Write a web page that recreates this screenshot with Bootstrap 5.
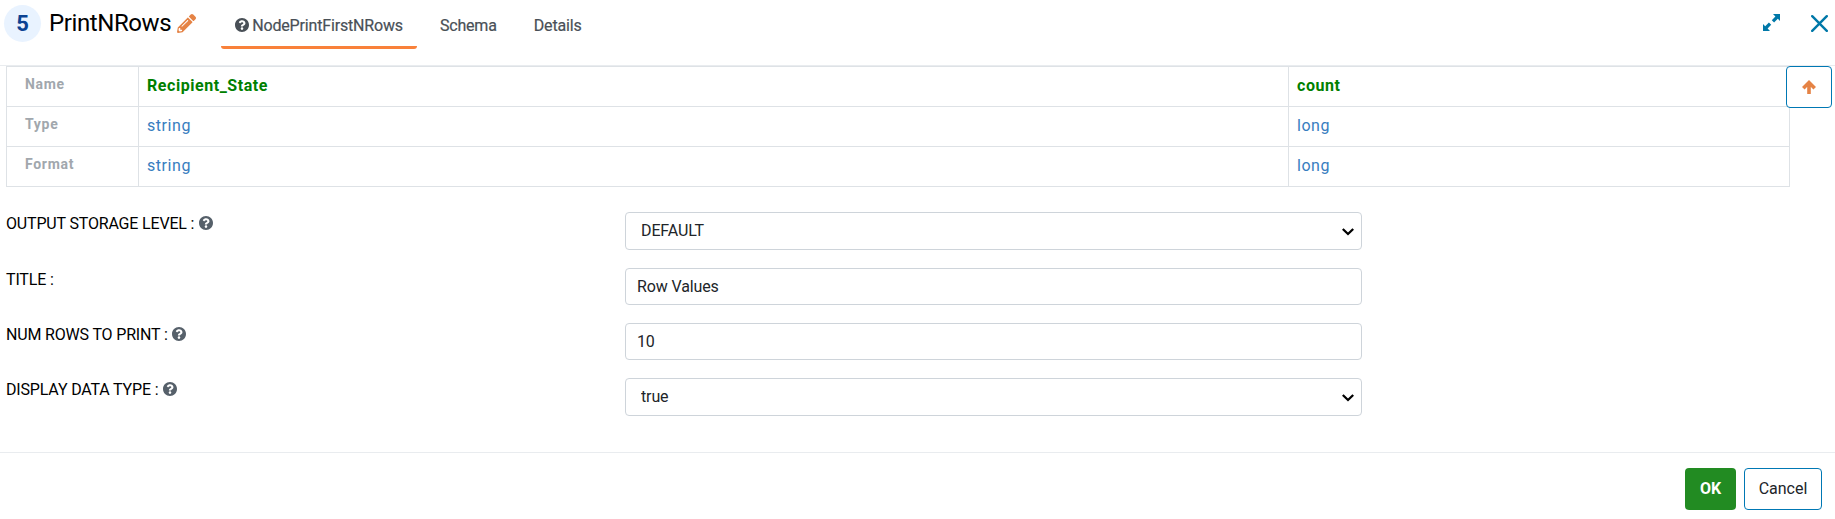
<!DOCTYPE html>
<html lang="en">
<head>
<meta charset="utf-8">
<title>PrintNRows</title>
<link href="https://cdn.jsdelivr.net/npm/bootstrap@5.3.0/dist/css/bootstrap.min.css" rel="stylesheet">
<style>
  body { font-family: Roboto, sans-serif; font-size: 16px; color: #000; background: #fff; overflow: hidden; }
  .dlg-head { height: 66px; border-bottom: 1px solid #e9ecef; padding-left: 4px; }
  .step-no { width: 37px; height: 37px; margin-top: 5px; background: #e9f3ff; color: #0b4292; font-size: 22px; font-weight: 700; }
  .dlg-title { font-size: 24px; line-height: 36px; margin: 5px 0 0 8px; font-weight: 400; letter-spacing: -.4px; }
  .pencil { width: 19px; height: 19px; margin: 14px 0 0 6px; fill: #e58345; }
  .dlg-tabs { margin-left: 25px; letter-spacing: -.17px; }
  .dlg-tabs .nav-link { height: 49px; padding: 14px 14px 0; line-height: 24px; font-weight: 400; color: #495057; border-bottom: 3px solid transparent; border-radius: 3px; -webkit-text-stroke: .2px #495057; }
  .dlg-tabs .nav-item + .nav-item { margin-left: 9px; }
  .dlg-tabs .nav-link.active { border-bottom-color: #f9813a; }
  .q { width: 14px; height: 14px; fill: #495057; }
  .q-tab { margin: -3px 3px 0 0; }
  .q-form { margin: -3px 0 0 1px; fill: #56606a; }
  .schema { width: 1784px; margin-left: 6px; table-layout: fixed; border-collapse: collapse; letter-spacing: .55px; }
  .schema th, .schema td { border: 1px solid #dee2e6; height: 40px; padding: 0 8px 2px; line-height: 24px; vertical-align: middle; color: #377dc0; }
  .schema th { font-size: 14px; color: #a1a7ad; padding: 0 18px 5px; letter-spacing: .7px; }
  .schema .field-name { color: #008000; font-weight: 700; }
  .up-btn { position: absolute; left: 1786px; top: 66px; width: 46px; height: 42px; border: 1px solid #0078b4; border-radius: 4px; background: #fff; }
  .fields { padding: 25px 0 0 6px; }
  .field-row { margin-bottom: 18px; letter-spacing: -.17px; }
  .field-row label { width: 619px; line-height: 24px; }
  .field-row .form-control, .field-row .form-select { width: 737px; height: 37px; padding: 0 11px; border: 1px solid #ced4da; border-radius: 4px; color: #212529; font-size: 16px; line-height: 24px; letter-spacing: -.12px; }
  .field-row .form-select { height: 38px; padding-left: 15px; background-image: none; appearance: none; }
  .chev { position: absolute; right: 8px; top: 16px; }
  .dlg-foot { height: 67px; margin-top: 36px; border-top: 1px solid #e9ecef; padding: 15px 13px 0 0; }
  .dlg-foot .btn { height: 42px; padding: 0; font-size: 16px; border-radius: 4px; }
  .btn-ok { width: 51px; background: #228b22; color: #fff; font-weight: 700; }
  .btn-no { width: 78px; border: 1px solid #0078b4; color: #212529; margin-left: 8px; }
</style>
</head>
<body>
<svg class="d-none">
  <symbol id="question" viewBox="8 8 496 496"><path d="M504 256c0 136.997-111.043 248-248 248S8 392.997 8 256C8 119.083 119.043 8 256 8s248 111.083 248 248zM262.655 90c-54.497 0-89.255 22.957-116.549 63.758-3.536 5.286-2.353 12.415 2.715 16.258l34.699 26.31c5.205 3.947 12.621 3.008 16.665-2.122 17.864-22.658 30.113-35.797 57.303-35.797 20.429 0 45.698 13.148 45.698 32.958 0 14.976-12.363 22.667-32.534 33.976C247.128 238.528 216 254.941 216 296v4c0 6.627 5.373 12 12 12h56c6.627 0 12-5.373 12-12v-1.333c0-28.462 83.186-29.647 83.186-106.667 0-58.002-60.165-102-116.531-102zM256 338c-25.365 0-46 20.635-46 46 0 25.364 20.635 46 46 46s46-20.636 46-46c0-25.365-20.635-46-46-46z"/></symbol>
</svg>
<header class="dlg-head d-flex align-items-start">
  <div class="step-no rounded-circle d-flex align-items-center justify-content-center">5</div>
  <h1 class="dlg-title">PrintNRows</h1>
  <svg class="pencil" viewBox="0 0 512 512"><path d="M497.900 142.100l-46.100 46.100c-4.700 4.700-12.300 4.700-17 0l-111-111c-4.700-4.700-4.700-12.300 0-17l46.100-46.100c18.700-18.700 49.100-18.700 67.900 0l60.100 60.100c18.800 18.700 18.800 49.100 0 67.900zM284.200 99.800L21.600 362.400.4 483.900c-2.900 16.400 11.400 30.600 27.800 27.800l121.500-21.300 262.600-262.600c4.700-4.700 4.700-12.300 0-17l-111-111c-4.800-4.700-12.400-4.700-17.100 0zM124.100 339.900c-5.500-5.500-5.500-14.300 0-19.800l154-154c5.500-5.500 14.300-5.500 19.800 0s5.500 14.300 0 19.800l-154 154c-5.500 5.500-14.300 5.500-19.800 0zM88 424h48v36.300l-64.500 11.300-31.100-31.100L51.700 376H88v48z"/></svg>
  <ul class="nav dlg-tabs">
    <li class="nav-item"><a class="nav-link active" href="#"><svg class="q q-tab"><use href="#question"/></svg>NodePrintFirstNRows</a></li>
    <li class="nav-item"><a class="nav-link" href="#">Schema</a></li>
    <li class="nav-item"><a class="nav-link" href="#">Details</a></li>
  </ul>
  <div class="ms-auto d-flex">
    <svg width="17" height="17" viewBox="0 0 17 17" style="margin:14px 31px 0 0" fill="#0078a8"><path d="M10 0h7v7l-2.200-2.200-3.700 3.700-2.300-2.300 3.600-3.600zM7 17H0v-7l2.200 2.200 3.700-3.700 2.300 2.300-3.600 3.600z"/></svg>
    <svg width="17" height="17" viewBox="0 0 17 17" style="margin:15px 7px 0 0" fill="none" stroke="#0078a8" stroke-width="2.400" stroke-linecap="round"><path d="M1.200 1.200l14.600 14.600M15.800 1.200L1.200 15.800"/></svg>
  </div>
</header>
<main>
  <table class="schema">
    <colgroup><col style="width:132px"><col style="width:1150px"><col></colgroup>
    <tr><th>Name</th><td class="field-name">Recipient_State</td><td class="field-name">count</td></tr>
    <tr><th>Type</th><td>string</td><td>long</td></tr>
    <tr><th>Format</th><td>string</td><td>long</td></tr>
  </table>
  <button class="up-btn d-flex align-items-center justify-content-center p-0" aria-label="Up"><svg width="14" height="14" viewBox="0 0 14 14" fill="none" stroke="#e58345" stroke-width="3.600"><path d="M7 14V3M1.300 8.300L7 2.600l5.700 5.700"/></svg></button>
  <form class="fields">
    <div class="field-row d-flex"><label>OUTPUT STORAGE LEVEL : <svg class="q q-form"><use href="#question"/></svg></label>
      <div class="position-relative"><select class="form-select"><option>DEFAULT</option></select><svg class="chev" width="12" height="8" viewBox="0 0 12 8" fill="none" stroke="#000" stroke-width="2.300"><path d="M.8 1L6 6l5.200-5"/></svg></div></div>
    <div class="field-row d-flex"><label>TITLE :</label><input class="form-control" value="Row Values"></div>
    <div class="field-row d-flex"><label>NUM ROWS TO PRINT : <svg class="q q-form"><use href="#question"/></svg></label><input class="form-control" value="10"></div>
    <div class="field-row d-flex"><label>DISPLAY DATA TYPE : <svg class="q q-form"><use href="#question"/></svg></label>
      <div class="position-relative"><select class="form-select"><option>true</option></select><svg class="chev" width="12" height="8" viewBox="0 0 12 8" fill="none" stroke="#000" stroke-width="2.300"><path d="M.8 1L6 6l5.200-5"/></svg></div></div>
  </form>
</main>
<footer class="dlg-foot d-flex justify-content-end">
  <button class="btn btn-ok">OK</button><button class="btn btn-no">Cancel</button>
</footer>
<script src="https://cdn.jsdelivr.net/npm/bootstrap@5.3.0/dist/js/bootstrap.bundle.min.js"></script>
</body>
</html>
